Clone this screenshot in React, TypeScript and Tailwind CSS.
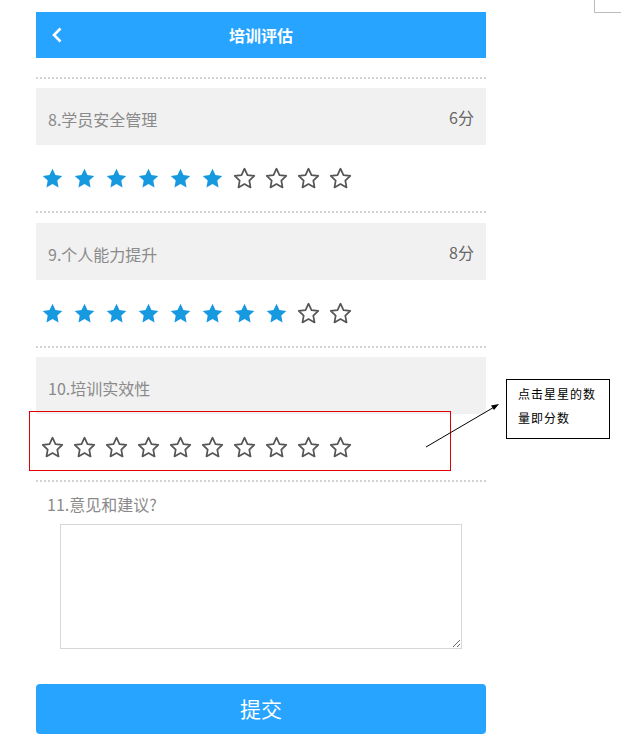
const STAR =
  "M12 1.8l3.1 6.6 7.1.9-5.2 4.9 1.3 7.1L12 17.8l-6.3 3.5 1.3-7.1L1.8 9.3l7.1-.9z";

const Star = ({ on }: { on: boolean }) => (
  <svg viewBox="0 0 24 24" className="h-[23px] w-[23px]">
    {on ? (
      <path d={STAR} fill="#1799e0" />
    ) : (
      <path d={STAR} fill="none" stroke="#555" strokeWidth="1.8" strokeLinejoin="round" />
    )}
  </svg>
);

const Stars = ({ score }: { score: number }) => (
  <div className="flex h-[66px] items-center gap-[9px] pl-[5px]">
    {Array.from({ length: 10 }).map((_, i) => (
      <Star key={i} on={i < score} />
    ))}
  </div>
);

const Dots = () => <div className="border-t-2 border-dotted border-[#d2d2d2]" />;

const Question = ({ label, score }: { label: string; score?: string }) => (
  <div className="flex h-[57px] items-center justify-between bg-[#f1f1f1] px-3">
    <span className="pt-[5px] text-[16px] text-[#8a8a8a]">{label}</span>
    {score && <span className="text-[16px] text-[#666]">{score}</span>}
  </div>
);

export default function App() {
  return (
    <div
      className="relative h-[746px] w-[621px] overflow-hidden bg-white"
      style={{ fontFamily: '"Noto Sans CJK SC", "Noto Sans", sans-serif' }}
    >
      <div className="ml-[36px] w-[450px] pt-[12px]">
        <div className="relative flex h-[46px] items-center justify-center bg-[#27a4ff]">
          <svg viewBox="0 0 12 16" className="absolute left-[15px] h-[16px] w-[12px]">
            <path d="M9.5 1.5L3 8l6.5 6.5" fill="none" stroke="#fff" strokeWidth="2.6" />
          </svg>
          <span className="text-[16px] font-bold text-white">培训评估</span>
        </div>

        <div className="mt-[19px]">
          <Dots />
        </div>
        <div className="mt-[9px]">
          <Question label="8.学员安全管理" score="6分" />
          <Stars score={6} />
        </div>
        <Dots />
        <div className="mt-[10px]">
          <Question label="9.个人能力提升" score="8分" />
          <Stars score={8} />
        </div>
        <Dots />
        <div className="mt-[9px]">
          <Question label="10.培训实效性" />
          <Stars score={0} />
        </div>
        <Dots />

        <div className="mt-[11px] pl-[11px] text-[16px] leading-[22px] text-[#8a8a8a]">
          11.意见和建议?
        </div>
        <div className="mt-[9px] pl-[24px]">
          <textarea className="block h-[125px] w-[402px] resize border border-[#d6d6d6] bg-white outline-none" />
        </div>

        <button className="mt-[35px] flex h-[50px] w-[450px] items-center justify-center rounded-[4px] bg-[#27a4ff] text-[21px] text-white">
          提交
        </button>
      </div>

      {/* annotation overlay */}
      <div className="absolute left-[29px] top-[411px] h-[60px] w-[422px] border border-[#e00000]" />
      <svg className="absolute left-0 top-0 h-[746px] w-[621px]" viewBox="0 0 621 746">
        <line x1="426" y1="447" x2="496" y2="406" stroke="#000" strokeWidth="1" />
        <path d="M499 404l-8 1.5 3 4.5z" fill="#000" />
        <path d="M594.5 0v12.5H621" fill="none" stroke="#bbb" strokeWidth="1" />
      </svg>
      <div
        className="absolute left-[506px] top-[379px] h-[60px] w-[104px] border border-black bg-white pl-[11px] pt-[2px] text-[12px] leading-[24px] tracking-[1px] text-black"
        style={{ fontFamily: '"Noto Sans CJK SC", sans-serif' }}
      >
        点击星星的数
        <br />
        量即分数
      </div>
    </div>
  );
}
